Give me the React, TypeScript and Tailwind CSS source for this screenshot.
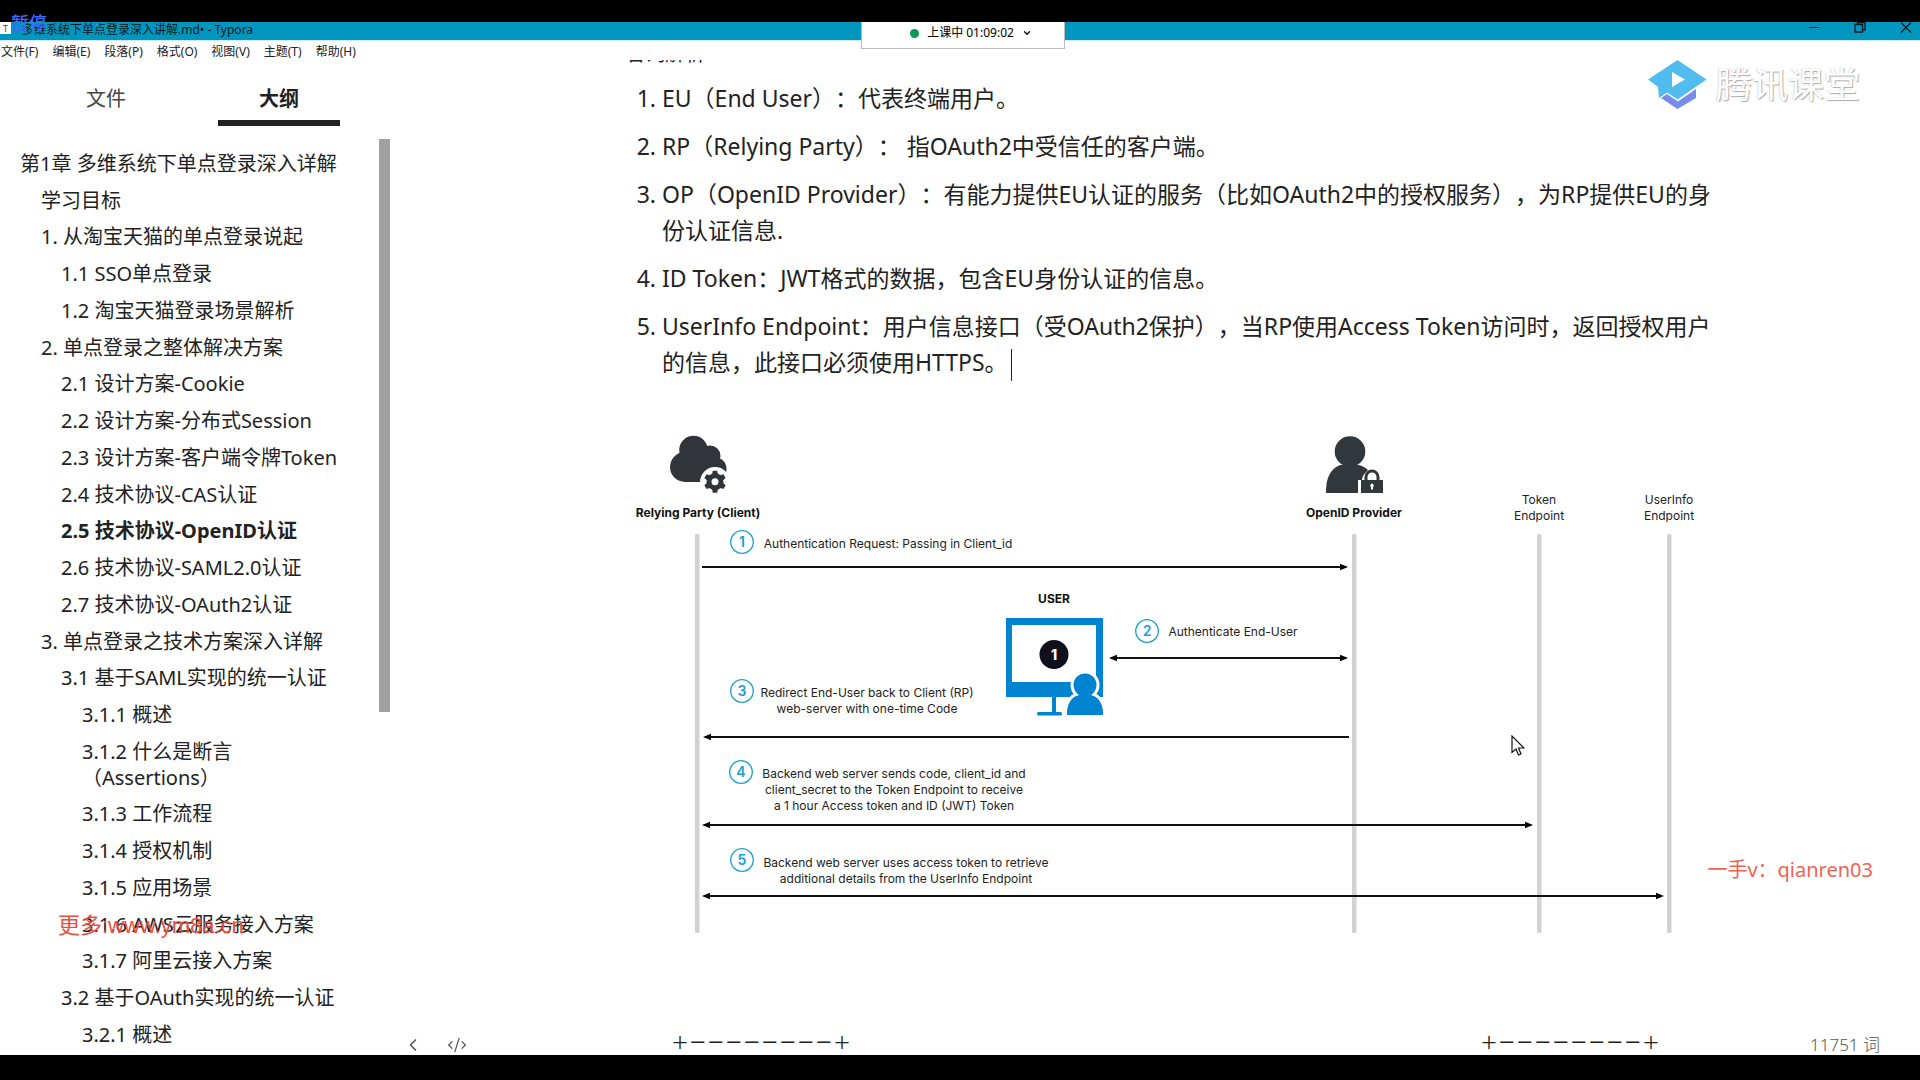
import { useState } from 'react'
import { ChevronDown, ChevronLeft, CodeXml } from 'lucide-react'
import { clsx } from 'clsx'

interface OutlineItem {
  level: 0 | 1 | 2 | 3
  text: string
}

const menus = ['文件(F)', '编辑(E)', '段落(P)', '格式(O)', '视图(V)', '主题(T)', '帮助(H)']

const outline: OutlineItem[] = [
  { level: 0, text: '第1章 多维系统下单点登录深入详解' },
  { level: 1, text: '学习目标' },
  { level: 1, text: '1. 从淘宝天猫的单点登录说起' },
  { level: 2, text: '1.1 SSO单点登录' },
  { level: 2, text: '1.2 淘宝天猫登录场景解析' },
  { level: 1, text: '2. 单点登录之整体解决方案' },
  { level: 2, text: '2.1 设计方案-Cookie' },
  { level: 2, text: '2.2 设计方案-分布式Session' },
  { level: 2, text: '2.3 设计方案-客户端令牌Token' },
  { level: 2, text: '2.4 技术协议-CAS认证' },
  { level: 2, text: '2.5 技术协议-OpenID认证' },
  { level: 2, text: '2.6 技术协议-SAML2.0认证' },
  { level: 2, text: '2.7 技术协议-OAuth2认证' },
  { level: 1, text: '3. 单点登录之技术方案深入详解' },
  { level: 2, text: '3.1 基于SAML实现的统一认证' },
  { level: 3, text: '3.1.1 概述' },
  { level: 3, text: '3.1.2 什么是断言\n（Assertions）' },
  { level: 3, text: '3.1.3 工作流程' },
  { level: 3, text: '3.1.4 授权机制' },
  { level: 3, text: '3.1.5 应用场景' },
  { level: 3, text: '3.1.6 AWS云服务接入方案' },
  { level: 3, text: '3.1.7 阿里云接入方案' },
  { level: 2, text: '3.2 基于OAuth实现的统一认证' },
  { level: 3, text: '3.2.1 概述' },
]

const indent = ['pl-5', 'pl-[41px]', 'pl-[61px]', 'pl-[82px]']

const terms = [
  'EU（End User）：代表终端用户。',
  'RP（Relying Party）： 指OAuth2中受信任的客户端。',
  'OP（OpenID Provider）：有能力提供EU认证的服务（比如OAuth2中的授权服务），为RP提供EU的身份认证信息.',
  'ID Token：JWT格式的数据，包含EU身份认证的信息。',
  'UserInfo Endpoint：用户信息接口（受OAuth2保护），当RP使用Access Token访问时，返回授权用户的信息，此接口必须使用HTTPS。',
]

// x centres of the vertical lifelines
const lifelines = [60, 717, 902, 1032]

const arrows = [
  { y: 137, from: 65, to: 709, start: false, end: true },
  { y: 228, from: 474, to: 709, start: true, end: true },
  { y: 307, from: 68, to: 712, start: true, end: false },
  { y: 395, from: 67, to: 894, start: true, end: true },
  { y: 466, from: 67, to: 1025, start: true, end: true },
]

const steps = [
  { cx: 105, cy: 112, x: 251, y: 118, lines: ['Authentication Request: Passing in Client_id'] },
  { cx: 510, cy: 201, x: 596, y: 206, lines: ['Authenticate End-User'] },
  { cx: 105, cy: 261, x: 230, y: 267, lines: ['Redirect End-User back to Client (RP)', 'web-server with one-time Code'] },
  {
    cx: 104,
    cy: 342,
    x: 257,
    y: 348,
    lines: [
      'Backend web server sends code, client_id and',
      'client_secret to the Token Endpoint to receive',
      'a 1 hour Access token and ID (JWT) Token',
    ],
  },
  {
    cx: 105,
    cy: 430,
    x: 269,
    y: 437,
    lines: ['Backend web server uses access token to retrieve', 'additional details from the UserInfo Endpoint'],
  },
]

function TitleBar() {
  return (
    <header className="flex h-[18px] shrink-0 items-start justify-between bg-[#0096bd] text-xs text-[#0b1a22]">
      <div className="flex items-start gap-[11px]">
        <span className="flex h-3 w-[11px] items-center justify-center bg-white text-[9px] leading-none text-[#444]">
          T
        </span>
        <h1 className="leading-4">多维系统下单点登录深入讲解.md• - Typora</h1>
      </div>
      <div className="flex items-start gap-[34px] pr-2">
        <button aria-label="最小化">
          <svg className="h-3 w-3" viewBox="0 0 12 12" stroke="currentColor" strokeWidth="1">
            <path d="M1 5.5h10" />
          </svg>
        </button>
        <button aria-label="还原">
          <svg className="h-3 w-3" viewBox="0 0 12 12" fill="none" stroke="currentColor" strokeWidth="1.3">
            <path d="M1 2.500h7.500V10H1zM3.500 2.500V0.500h7.500v7.500H8.500" />
          </svg>
        </button>
        <button aria-label="关闭">
          <svg className="h-3 w-3" viewBox="0 0 12 12" stroke="currentColor" strokeWidth="1.2">
            <path d="M1 0.500l10 10M11 0.500l-10 10" />
          </svg>
        </button>
      </div>
    </header>
  )
}

function Sidebar() {
  const [tab, setTab] = useState<'files' | 'outline'>('outline')

  return (
    <aside className="flex w-[390px] shrink-0 flex-col">
      <div className="flex h-[68px] shrink-0 items-end gap-[51px] pl-[45px] text-xl text-[#444]">
        {(['files', 'outline'] as const).map((t) => (
          <button
            key={t}
            onClick={() => setTab(t)}
            className={clsx(
              'h-[46px] w-[122px] border-b-[6px] pb-0.5 leading-8',
              t === tab ? 'border-[#222] font-bold text-[#222]' : 'border-transparent',
            )}
          >
            {t === 'files' ? '文件' : '大纲'}
          </button>
        ))}
      </div>
      <div className="flex min-h-0 flex-1 justify-between pt-[13px]">
        <ul className="flex flex-col justify-between pt-3 pb-[7px] text-xl leading-[26px] text-[#222]">
          {outline.map((item) => (
            <li key={item.text} className={clsx('whitespace-pre', indent[item.level])}>
              <a href="#" className={clsx(item.text.startsWith('2.5') && 'font-bold')}>
                {item.text}
              </a>
            </li>
          ))}
        </ul>
        <div className="h-[573px] w-[11px] bg-[#a0a0a0]" />
      </div>
    </aside>
  )
}

function Arrow({ y, from, to, start, end }: (typeof arrows)[number]) {
  return (
    <g fill="#000">
      <path d={`M${from} ${y}H${to}`} stroke="#111" strokeWidth="1.8" />
      {start && <path d={`M${from - 2} ${y}l8 -3.200v6.400z`} />}
      {end && <path d={`M${to + 2} ${y}l-8 -3.200v6.400z`} />}
    </g>
  )
}

function SequenceDiagram() {
  return (
    <svg
      className="h-[506px] w-[1080px] overflow-visible font-['Inter','Noto_Sans',sans-serif]"
      viewBox="0 0 1080 506"
      fontSize="12"
      fill="#222"
    >
      {/* relying party */}
      <g fill="#32343b">
        <circle cx="48" cy="37" r="15" />
        <circle cx="56.500" cy="20" r="14.300" />
        <circle cx="73" cy="26" r="10.500" />
        <circle cx="77.500" cy="39" r="12" />
        <path d="M48 24h28v28H48z" />
      </g>
      <circle cx="78" cy="52" r="15" fill="#fff" />
      <path d="M62 52h34v14h-34z" fill="#fff" />
      <g transform="translate(78 51.700)">
        <circle r="6" fill="none" stroke="#32343b" strokeWidth="5" />
        {[0, 60, 120, 180, 240, 300].map((a) => (
          <path key={a} d="M-3 -7l0.800 -4h4.400l0.800 4z" fill="#32343b" transform={`rotate(${a})`} />
        ))}
      </g>

      {/* provider */}
      <g fill="#32373c">
        <circle cx="713" cy="21.500" r="15.300" />
        <path d="M689 63c0-15 4-24 14-28h19c4 1 7 3 9 5-3 3-6 6-6 10h-4v13z" />
        <path d="M724 50h22v13h-22z" />
      </g>
      <path d="M729 50v-3a6 6 0 0 1 12 0v3" fill="none" stroke="#32373c" strokeWidth="3" />
      <path d="M735 53.500a2 2 0 0 1 1 3.500v2.500h-2V57a2 2 0 0 1 1-3.500z" fill="#fff" />
      <path d="M722.500 50v14" stroke="#fff" strokeWidth="2" />

      <g fontWeight="700" textAnchor="middle" fill="#111">
        <text x="61" y="87">Relying Party (Client)</text>
        <text x="717" y="87">OpenID Provider</text>
        <text x="417" y="173">USER</text>
      </g>
      <g textAnchor="middle">
        <text x="902" y="74">Token</text>
        <text x="902" y="90">Endpoint</text>
        <text x="1032" y="74">UserInfo</text>
        <text x="1032" y="90">Endpoint</text>
      </g>

      {lifelines.map((x) => (
        <rect key={x} x={x - 2} y="104" width="4.500" height="399" rx="1" fill="#d2d2d2" />
      ))}
      {arrows.map((a) => (
        <Arrow key={a.y} {...a} />
      ))}

      {steps.map((s, i) => (
        <g key={s.y} textAnchor="middle">
          <circle cx={s.cx} cy={s.cy} r="11.300" fill="none" stroke="#1a9fd4" strokeWidth="1.300" />
          <text x={s.cx} y={s.cy + 5} fontSize="14" fontWeight="600" fill="#1a9fd4">
            {i + 1}
          </text>
          {s.lines.map((line, n) => (
            <text key={line} x={s.x} y={s.y + n * 16}>
              {line}
            </text>
          ))}
        </g>
      ))}

      {/* user at the monitor */}
      <g fill="#0083d0">
        <path fillRule="evenodd" d="M369 188h97v79h-97zM375 195v57h84v-57z" />
        <path d="M415 267h4v15h-4z" />
        <rect x="400" y="282" width="25" height="3.500" rx="1.500" />
        <g stroke="#fff" strokeWidth="6" paintOrder="stroke">
          <path d="M430 285c0-12 5-18 12-20h12c7 2 12 8 12 20z" />
          <circle cx="448" cy="255" r="11.500" />
        </g>
        <path d="M430 285c0-12 5-18 12-20h12c7 2 12 8 12 20z" />
      </g>
      <path d="M466.500 268h6v20h-6zM428 285.500h42v4h-42z" fill="#fff" />
      <circle cx="417" cy="224.500" r="14.500" fill="#10101c" />
      <text x="417" y="230" fontSize="14" fontWeight="800" textAnchor="middle" fill="#fff">
        1
      </text>
    </svg>
  )
}

function FlowRule() {
  return (
    <div className="flex">
      {[...'+−−−−−−−−+'].map((c, i) => (
        <span key={i} className="w-[18px] text-center">
          {c}
        </span>
      ))}
    </div>
  )
}

function Document() {
  return (
    <main className="flex min-w-0 flex-1 flex-col pt-0.5 pr-[190px] pl-[247px] text-[23px] leading-9 text-[#222] [text-spacing-trim:space-all]">
      {/* heading is scrolled almost out of view */}
      <div className="-ml-3 flex h-[5px] shrink-0 items-end overflow-hidden">
        <p className="-mb-[7px] text-xl leading-9">名词解析</p>
      </div>
      <ol className="mt-[15px] flex list-decimal flex-col gap-3 pl-[25px]">
        {terms.map((t, i) => (
          <li key={t}>
            {t}
            {i === terms.length - 1 && <span className="ml-[3px] inline-block h-8 w-px bg-[#222] align-middle" />}
          </li>
        ))}
      </ol>
      <div className="mt-[49px] shrink-0">
        <SequenceDiagram />
      </div>
      <div className="mt-auto flex h-[30px] shrink-0 gap-[629px] pl-[34px] text-[28px] leading-8 font-light">
        <FlowRule />
        <FlowRule />
      </div>
    </main>
  )
}

function ClassroomLogo() {
  return (
    <div className="absolute top-[60px] right-[60px] flex items-center gap-[9px]">
      <svg className="h-[50px] w-[59px]" viewBox="0 0 59 50">
        <path d="M13 38l6-4 11 7.500 18-12.500v9L29.500 49z" fill="#7a8cea" />
        <path d="M29.500 0L58.500 19.500 29.500 39.500 19 32.500 11 38 10 27 0 19.500z" fill="#50bdee" />
        <path d="M24 12v15l13-7.500z" fill="#fff" />
      </svg>
      <span className="text-4xl leading-[50px] text-white [text-shadow:1px_1px_1px_#aaa,-1px_0_1px_#ddd]">腾讯课堂</span>
    </div>
  )
}

export default function App() {
  return (
    <div className="relative flex h-screen flex-col overflow-hidden bg-black pt-[22px] pb-[25px] font-['Noto_Sans','Noto_Sans_CJK_SC',sans-serif]">
      <TitleBar />
      <nav className="flex h-[18px] shrink-0 gap-3.5 border-t border-[#cdeaf2] bg-white pl-px text-xs leading-[22px] text-[#222]">
        {menus.map((m) => (
          <button key={m}>{m}</button>
        ))}
      </nav>
      <div className="flex min-h-0 flex-1 bg-white">
        <Sidebar />
        <Document />
      </div>

      {/* status bar floats over the document */}
      <footer className="absolute right-10 bottom-[25px] left-[403px] flex h-5 items-center justify-between text-[17px] text-[#555]">
        <div className="flex items-center gap-6">
          <button aria-label="折叠侧栏">
            <ChevronLeft className="h-6 w-5" />
          </button>
          <button aria-label="源代码模式">
            <CodeXml className="h-5 w-5" strokeWidth={1.5} />
          </button>
        </div>
        <span className="font-light">11751 词</span>
      </footer>

      <button className="absolute top-[22px] left-[861px] flex h-[27px] w-[204px] items-center justify-center gap-2 border border-t-0 border-[#bbb] bg-white pb-1 pl-4 text-xs text-black">
        <span className="h-[9px] w-[9px] rounded-full bg-[#0b9a52]" />
        上课中 01:09:02
        <ChevronDown className="h-[10px] w-[10px]" strokeWidth={3} />
      </button>
      <ClassroomLogo />
      <p className="absolute top-[11px] left-[11px] text-lg leading-6 font-medium text-[#4169ff]">暂停</p>
      <p className="absolute top-[912px] left-[58px] font-['Liberation_Sans','Noto_Sans_CJK_SC',sans-serif] text-[22px] leading-7 text-[#e9503f]">
        更多:www.ym8a.cn
      </p>
      <p className="absolute top-[856px] right-[47px] text-xl leading-7 text-[#ee6352]">一手v：qianren03</p>
      <svg className="absolute top-[735px] left-[1511px] h-[22px] w-[14px]" viewBox="0 0 14 22">
        <path d="M1 1v16.500l4-3.500 2.500 6 2.500-1-2.500-6H13z" fill="#fff" stroke="#111" strokeWidth="1.200" />
      </svg>
    </div>
  )
}
